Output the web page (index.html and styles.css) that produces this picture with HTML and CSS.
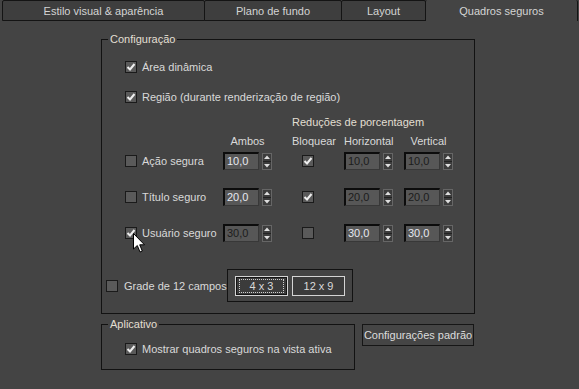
FILE: index.html
```html
<!DOCTYPE html>
<html lang="pt">
<head>
    <meta charset="UTF-8">
    <title>Quadros seguros</title>
    <link rel="stylesheet" href="styles.css">
</head>
<body>
    <div class="tabs">
        <div class="tab tab-wide">Estilo visual &amp; aparência</div>
        <div class="tab tab-mid">Plano de fundo</div>
        <div class="tab tab-small">Layout</div>
        <div class="tab tab-active">Quadros seguros</div>
    </div>

    <div class="page">
        <div class="group group-config">
            <div class="group-title">Configuração</div>

            <div class="check-row row-area">
                <span class="check"><svg width="10" height="10" viewBox="0 0 10 10"><polyline points="1.5,5 4,7.5 8.5,2" /></svg></span>
                <span>Área dinâmica</span>
            </div>
            <div class="check-row row-region">
                <span class="check"><svg width="10" height="10" viewBox="0 0 10 10"><polyline points="1.5,5 4,7.5 8.5,2" /></svg></span>
                <span>Região (durante renderização de região)</span>
            </div>

            <div class="trow trow-title">
                <span class="reduce-title">Reduções de porcentagem</span>
            </div>
            <div class="trow trow-head">
                <span></span>
                <span class="head-col">Ambos</span>
                <span>Bloquear</span>
                <span class="head-col">Horizontal</span>
                <span class="head-col">Vertical</span>
            </div>

            <!-- linha 1 -->
            <div class="trow trow-data trow-first">
                <div class="check-label"><span class="check"></span><span>Ação segura</span></div>
                <div class="spin"><span class="field">10,0</span><svg class="arrows" width="10" height="17" viewBox="0 0 10 17"><rect x="0.5" y="0.5" width="9" height="16" /><line x1="1" y1="8.5" x2="9" y2="8.5" /><polygon points="5,2.5 8,6 2,6" /><polygon points="5,14.5 8,11 2,11" /></svg></div>
                <div class="lock"><span class="check"><svg width="10" height="10" viewBox="0 0 10 10"><polyline points="1.5,5 4,7.5 8.5,2" /></svg></span></div>
                <div class="spin"><span class="field off">10,0</span><svg class="arrows" width="10" height="17" viewBox="0 0 10 17"><rect x="0.5" y="0.5" width="9" height="16" /><line x1="1" y1="8.5" x2="9" y2="8.5" /><polygon points="5,2.5 8,6 2,6" /><polygon points="5,14.5 8,11 2,11" /></svg></div>
                <div class="spin"><span class="field off">10,0</span><svg class="arrows" width="10" height="17" viewBox="0 0 10 17"><rect x="0.5" y="0.5" width="9" height="16" /><line x1="1" y1="8.5" x2="9" y2="8.5" /><polygon points="5,2.5 8,6 2,6" /><polygon points="5,14.5 8,11 2,11" /></svg></div>
            </div>

            <!-- linha 2 -->
            <div class="trow trow-data">
                <div class="check-label"><span class="check"></span><span>Título seguro</span></div>
                <div class="spin"><span class="field">20,0</span><svg class="arrows" width="10" height="17" viewBox="0 0 10 17"><rect x="0.5" y="0.5" width="9" height="16" /><line x1="1" y1="8.5" x2="9" y2="8.5" /><polygon points="5,2.5 8,6 2,6" /><polygon points="5,14.5 8,11 2,11" /></svg></div>
                <div class="lock"><span class="check"><svg width="10" height="10" viewBox="0 0 10 10"><polyline points="1.5,5 4,7.5 8.5,2" /></svg></span></div>
                <div class="spin"><span class="field off">20,0</span><svg class="arrows" width="10" height="17" viewBox="0 0 10 17"><rect x="0.5" y="0.5" width="9" height="16" /><line x1="1" y1="8.5" x2="9" y2="8.5" /><polygon points="5,2.5 8,6 2,6" /><polygon points="5,14.5 8,11 2,11" /></svg></div>
                <div class="spin"><span class="field off">20,0</span><svg class="arrows" width="10" height="17" viewBox="0 0 10 17"><rect x="0.5" y="0.5" width="9" height="16" /><line x1="1" y1="8.5" x2="9" y2="8.5" /><polygon points="5,2.5 8,6 2,6" /><polygon points="5,14.5 8,11 2,11" /></svg></div>
            </div>

            <!-- linha 3 -->
            <div class="trow trow-data">
                <div class="check-label"><span class="check"><svg width="10" height="10" viewBox="0 0 10 10"><polyline points="1.5,5 4,7.5 8.5,2" /></svg></span><span>Usuário seguro</span></div>
                <div class="spin"><span class="field off">30,0</span><svg class="arrows" width="10" height="17" viewBox="0 0 10 17"><rect x="0.5" y="0.5" width="9" height="16" /><line x1="1" y1="8.5" x2="9" y2="8.5" /><polygon points="5,2.5 8,6 2,6" /><polygon points="5,14.5 8,11 2,11" /></svg></div>
                <div class="lock"><span class="check"></span></div>
                <div class="spin"><span class="field">30,0</span><svg class="arrows" width="10" height="17" viewBox="0 0 10 17"><rect x="0.5" y="0.5" width="9" height="16" /><line x1="1" y1="8.5" x2="9" y2="8.5" /><polygon points="5,2.5 8,6 2,6" /><polygon points="5,14.5 8,11 2,11" /></svg></div>
                <div class="spin"><span class="field">30,0</span><svg class="arrows" width="10" height="17" viewBox="0 0 10 17"><rect x="0.5" y="0.5" width="9" height="16" /><line x1="1" y1="8.5" x2="9" y2="8.5" /><polygon points="5,2.5 8,6 2,6" /><polygon points="5,14.5 8,11 2,11" /></svg></div>
            </div>

            <div class="grade-row">
                <span class="check"></span>
                <span class="grade-label">Grade de 12 campos</span>
                <div class="frame">
                    <div class="grid-btn pressed"><span class="focus">4 x 3</span></div>
                    <div class="grid-btn">12 x 9</div>
                </div>
            </div>
        </div>

        <div class="bottom">
            <div class="group group-app">
                <div class="group-title">Aplicativo</div>
                <div class="check-row row-show">
                    <span class="check"><svg width="10" height="10" viewBox="0 0 10 10"><polyline points="1.5,5 4,7.5 8.5,2" /></svg></span>
                    <span>Mostrar quadros seguros na vista ativa</span>
                </div>
            </div>
            <div class="btn-default">Configurações padrão</div>
        </div>
    </div>

    <!-- ponteiro do mouse por cima da caixa -->
    <svg class="cursor" width="13" height="21" viewBox="0 0 13 21">
        <polygon points="0.5,0.5 0.5,16 4.3,12.5 7,19 9.3,18 6.7,11.8 11.5,11.8" />
    </svg>
</body>
</html>
```

FILE: styles.css
```css
* {
    margin: 0;
    padding: 0;
    box-sizing: border-box;
}
body {
    width: 579px;
    height: 389px;
    overflow: hidden;
    position: relative;
    background-color: #444444;
    color: #d9d9d9;
    font: 11px/14px "Liberation Sans", Arial, sans-serif;
}

/* abas */
.tabs {
    display: flex;
    height: 21px;
    padding-left: 2px;
}
.tab {
    height: 21px;
    margin-left: -1px;
    border: 1px solid #141414;
    border-radius: 2px 2px 0 0;
    background-color: #3e3e3e;
    color: #d4d4d4;
    display: flex;
    align-items: center;
    justify-content: center;
}
.tab:first-child {
    margin-left: 0;
}
.tab-wide  { width: 203px; }
.tab-mid   { width: 138px; }
.tab-small { width: 85px; }
.tab-active {
    width: 153px;
    border-top: none;
    border-bottom: none;
    background-color: #444444;
}

.page {
    padding-left: 101px;
    width: 475px;
}

/* caixas de grupo */
.group {
    border: 1px solid #121212;
    padding-left: 4px;
}
.group-config {
    margin-top: 18px;
    padding-bottom: 11px;
}
.group-title {
    display: table;
    margin: -7px 0 0 2px;
    padding: 0 2px;
    line-height: 13px;
    background-color: #444444;
    color: #e2dfd2;
}

/* caixas de seleção */
.check {
    width: 12px;
    height: 12px;
    flex: none;
    border: 1px solid #1a1a1a;
    background-color: #5a5a5a;
    display: flex;
}
.check svg polyline {
    fill: none;
    stroke: #eeeeee;
    stroke-width: 2;
}
.check-row {
    display: flex;
    align-items: center;
    gap: 5px;
    height: 14px;
    margin-left: 19px;
}
.row-area   { margin-top: 14px; }
.row-region { margin-top: 16px; }

/* tabela das reduções */
.trow {
    display: grid;
    grid-template-columns: 98px 69px 52px 60px 50px;
    align-items: center;
    margin-left: 19px;
    height: 14px;
}
.trow-title { margin-top: 11px; }
.trow-head  { margin-top: 5px; }
.reduce-title {
    grid-column: 3 / span 3;
    color: #e2dfd2;
}
.head-col {
    width: 49px;
    text-align: center;
}
.trow-data {
    height: 18px;
    margin-top: 18px;
}
.trow-first { margin-top: 4px; }

.check-label {
    display: flex;
    align-items: center;
    gap: 5px;
}
.lock {
    padding-left: 10px;
}

.spin {
    display: flex;
    align-items: center;
    gap: 3px;
}
.field {
    width: 36px;
    height: 18px;
    padding-left: 2px;
    line-height: 15px;
    background-color: #575757;
    border-style: solid;
    border-width: 2px 1px 1px 2px;
    border-color: #0c0c0c #383838 #383838 #0c0c0c;
    color: #e6e8f0;
}
.field.off {
    color: #1c1c1c;
}
.arrows rect {
    fill: #3c3c3c;
    stroke: #666666;
}
.arrows line {
    stroke: #222222;
}
.arrows polygon {
    fill: #dddddd;
}

/* grade de 12 campos */
.grade-row {
    display: flex;
    align-items: center;
    gap: 6px;
    margin-top: 27px;
}
.grade-label {
    width: 97px;
    white-space: nowrap;
}
.frame {
    border: 1px solid #121212;
    padding: 6px 7px 5px;
    display: flex;
    gap: 4px;
}
.grid-btn {
    width: 53px;
    height: 20px;
    border: 1px solid #d4d4d4;
    background-color: #3b3b3b;
    display: flex;
    align-items: center;
    justify-content: center;
}
.grid-btn.pressed {
    box-shadow: inset 0 0 0 1px #141414;
    justify-content: flex-start;
    padding-left: 3px;
}
.focus {
    width: 45px;
    height: 14px;
    border: 1px dotted #cfcfcf;
    display: flex;
    align-items: center;
    justify-content: center;
}

/* parte de baixo */
.bottom {
    display: flex;
    align-items: flex-start;
    margin-top: 10px;
}
.group-app {
    width: 254px;
    padding-bottom: 13px;
}
.row-show { margin-top: 11px; }

.btn-default {
    width: 112px;
    height: 22px;
    margin-left: 7px;
    border: 1px solid #161616;
    background-color: #454545;
    color: #dcdcdc;
    display: flex;
    align-items: center;
    justify-content: center;
}

.cursor {
    position: absolute;
    left: 133px;
    top: 233px;
}
.cursor polygon {
    fill: #ffffff;
    stroke: #000000;
    stroke-width: 1;
}
```
